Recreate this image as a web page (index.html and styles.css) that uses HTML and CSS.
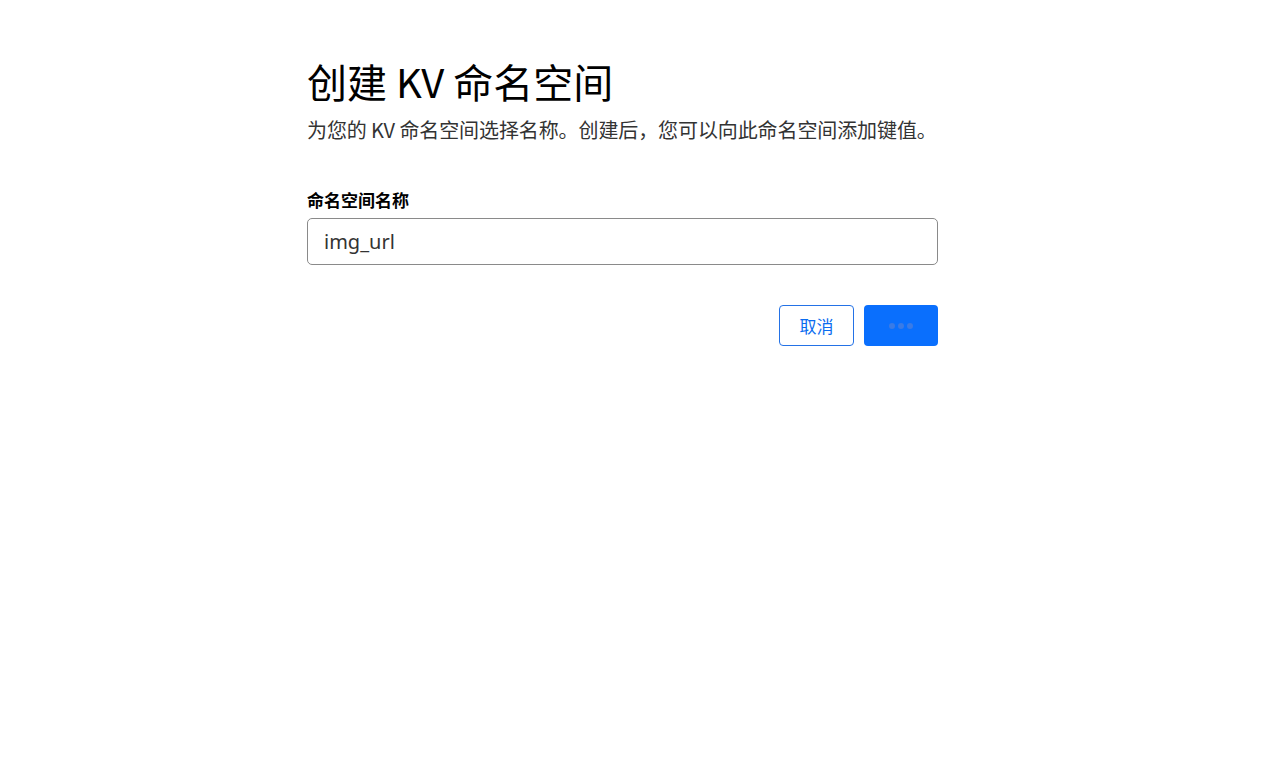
FILE: index.html
```html
<!DOCTYPE html>
<html lang="zh-CN">
<head>
<meta charset="utf-8">
<title>创建 KV 命名空间</title>
<link rel="stylesheet" href="styles.css">
</head>
<body>
<main class="page">
  <h1 class="title">创建 KV 命名空间</h1>
  <p class="subtitle">为您的 KV 命名空间选择名称。创建后，您可以向此命名空间添加键值。</p>
  <form class="form">
    <label class="label" for="ns">命名空间名称</label>
    <input class="input" id="ns" type="text" value="img_url">
    <div class="actions">
      <button type="button" class="btn btn-cancel">取消</button>
      <button type="button" class="btn btn-primary" aria-label="加载中">
        <span class="dot"></span><span class="dot"></span><span class="dot"></span>
      </button>
    </div>
  </form>
</main>
</body>
</html>
```
FILE: styles.css
```css
* { box-sizing: border-box; }
html, body { margin: 0; padding: 0; background: #fff; }
body {
  font-family: "Noto Sans CJK SC", "Noto Sans", sans-serif;
  color: #000;
}
.page {
  width: 631px;
  margin: 0 0 0 307px;
  padding-top: 53px;
}
.title {
  margin: 0;
  font-size: 40px;
  font-weight: 400;
  line-height: 56px;
  color: #000;
}
.subtitle {
  margin: 7px 0 0;
  font-size: 20px;
  line-height: 28px;
  color: #333;
  white-space: nowrap;
  letter-spacing: -0.1px;
}
.form {
  display: flex;
  flex-direction: column;
  margin-top: 44px;
}
.label {
  font-size: 17px;
  font-weight: 700;
  line-height: 24px;
  color: #000;
}
.input {
  margin-top: 6px;
  height: 47px;
  width: 100%;
  border: 1px solid #8a8a8a;
  border-radius: 5px;
  padding: 0 16px;
  font-family: "Noto Sans", "Noto Sans CJK SC", sans-serif;
  font-size: 20px;
  color: #333;
  outline: none;
}
.actions {
  display: flex;
  justify-content: flex-end;
  gap: 10px;
  margin-top: 40px;
}
.btn {
  height: 41px;
  width: 75px;
  border-radius: 4px;
  font-family: inherit;
  font-size: 17px;
  padding: 0;
  display: flex;
  align-items: center;
  justify-content: center;
  cursor: pointer;
}
.btn-cancel {
  background: #fff;
  border: 1px solid #2472e6;
  color: #0a6cf0;
}
.btn-primary {
  width: 74px;
  background: #0a6ffd;
  border: none;
  gap: 3px;
}
.dot {
  width: 6px;
  height: 6px;
  border-radius: 50%;
  background: #3a7be6;
}
```
